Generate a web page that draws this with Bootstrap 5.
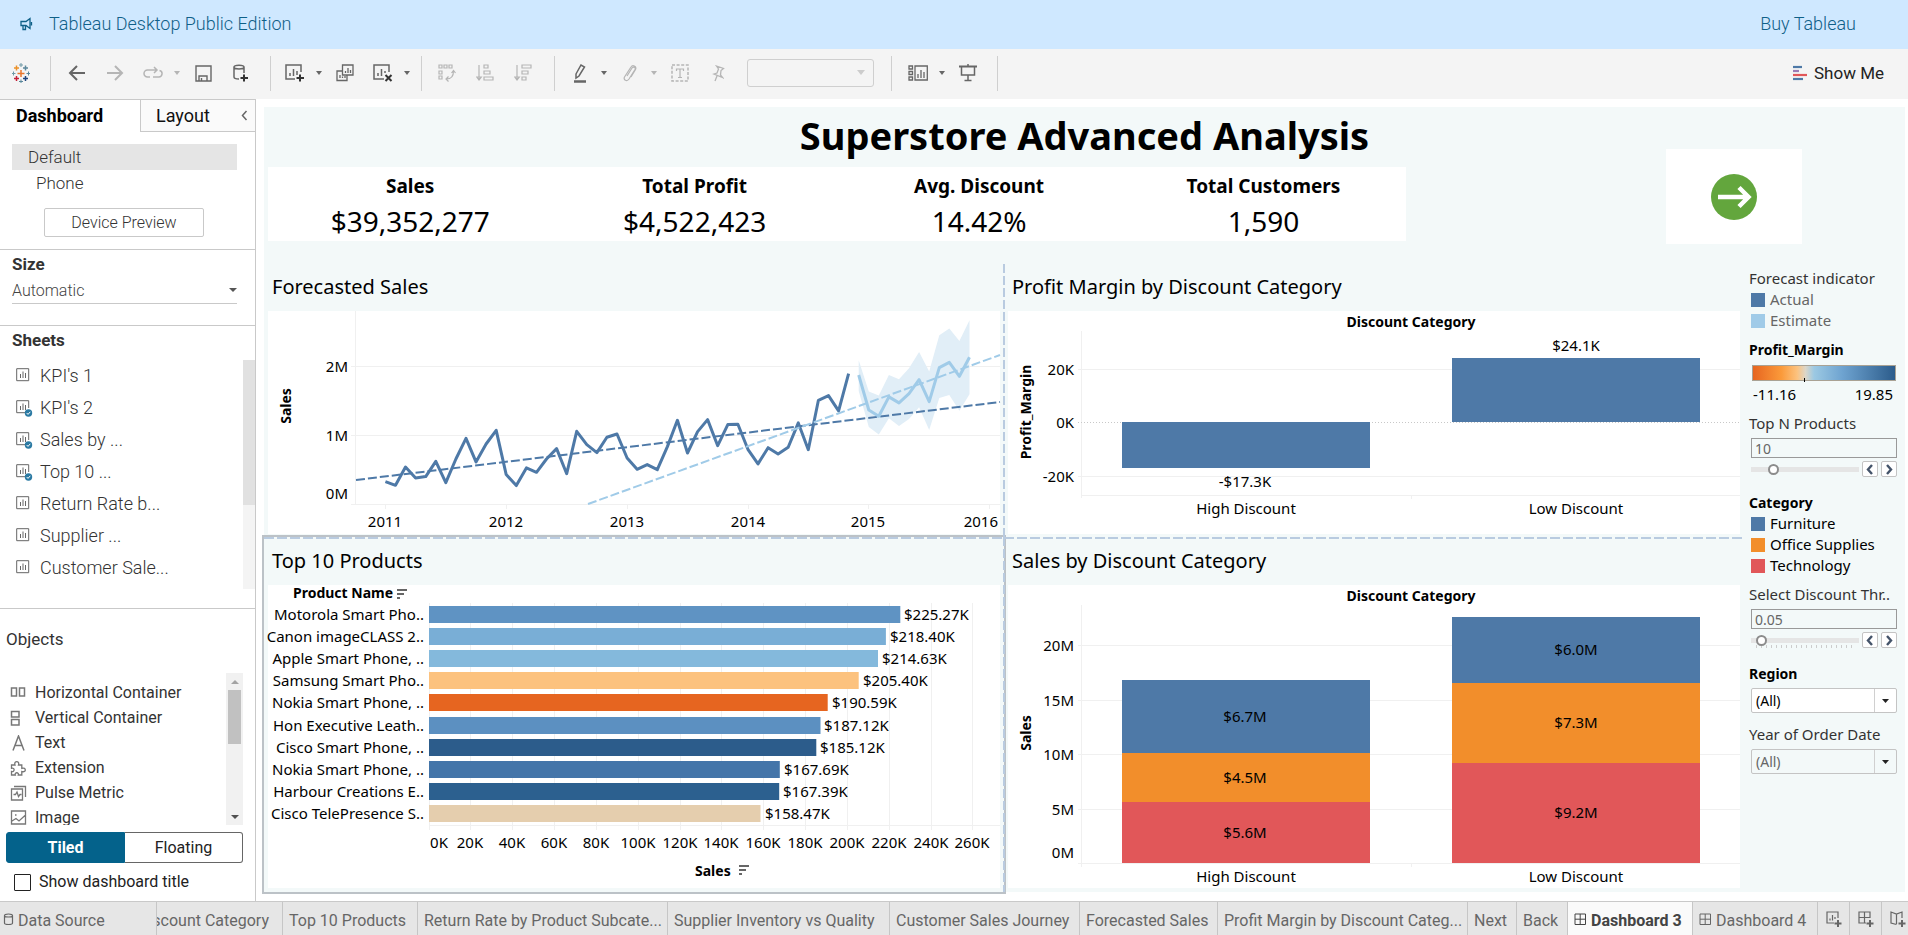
<!DOCTYPE html>
<html lang="en">
<head>
<meta charset="utf-8">
<meta name="viewport" content="width=device-width, initial-scale=1">
<title>Superstore Advanced Analysis</title>
<link href="https://cdn.jsdelivr.net/npm/bootstrap@5.3.0/dist/css/bootstrap.min.css" rel="stylesheet">
<style>
  :root { --line:#c9c9c9; --canvas:#f3f9f9; --ink:#333; --dash:#b9cbe0; }
  body { font-family: Roboto, "Liberation Sans", sans-serif; font-size:16px; line-height:24px; color:var(--ink); background:#fff; }
  svg { display:block; }
  .ic { fill:none; stroke:currentColor; stroke-width:1.5; }
  button { color:inherit; }
  .bare { border:0; background:none; padding:0; }

  .promo { background:#cfe8ff; height:49px; padding:0 52px 2px 20px; font-size:18px; font-weight:300; }
  .promo, .promo a { color:#0f6088; }
  .tools { background:#f4f4f4; height:50px; color:#666; padding-bottom:2px; }
  .tgroup { display:flex; align-items:center; gap:10px; height:35px; border-right:1px solid #cfcfcf; }
  .tgroup .tb { width:28px; height:28px; display:flex; align-items:center; justify-content:center; }
  .tgroup .dd { width:12px; margin:0 -4px 0 -6px; display:flex; justify-content:center; }
  .dd::before { content:""; border:3px solid transparent; border-top:4px solid #666; border-bottom:0; }
  .dim { color:#b5b5b5; }
  .dd.dim::before { border-top-color:#b5b5b5; }
  .g0 { width:51px; padding-left:7px; }
  .g1 { padding:0 15px 0 12px; }
  .g2 { padding:0 12px 0 10px; }
  .g3 { padding:0 17px 0 11px; }
  .g4 { padding:0 17px 0 11px; }
  .g5 { padding:0 15px 0 12px; }
  .fit { width:127px; height:28px; margin-left:5px; border:1px solid #cfcfcf; border-radius:3px; appearance:none; background:#f4f4f4 url("data:image/svg+xml,%3Csvg xmlns='http://www.w3.org/2000/svg' width='8' height='6'%3E%3Cpath d='M0 0h8L4 5z' fill='%23ccc'/%3E%3C/svg%3E") no-repeat right 8px center; }
  .showme { font-size:17px; color:#222; padding-right:24px; }

  .side { width:256px; flex:none; border-right:1px solid var(--line); border-top:1px solid var(--line); }
  .side-tabs { height:32px; font-size:18px; color:#111; }
  .tab-a { width:140px; padding:0 16px; text-align:left; font-weight:700; color:#000; }
  .tab-b { background:#fafafa; border:solid var(--line); border-width:0 0 1px 1px; padding:0 7px 0 15px; }
  .tab-b svg { color:#666; }
  .devices { padding:12px 18px 0 12px; font-size:17px; line-height:26px; font-weight:300; }
  .devices .on { background:#e5e5e5; }
  .devices button { display:block; width:100%; text-align:left; font-weight:300; }
  .preview { width:160px; height:29px; border:1px solid var(--line); border-radius:2px; background:#fff; margin:12px 0 12px 44px; font-size:16px; font-weight:300; }
  .sec { border-top:1px solid var(--line); }
  .sec h2 { font-size:17px; line-height:28px; font-weight:700; margin:0; padding-left:12px; }
  .size-select { width:225px; height:26px; margin:0 0 21px 12px; padding:0; border:0; border-bottom:1px solid var(--line); appearance:none; color:#444; font-weight:300; background:#fff url("data:image/svg+xml,%3Csvg xmlns='http://www.w3.org/2000/svg' width='8' height='5'%3E%3Cpath d='M0 0h8L4 4z' fill='%23555'/%3E%3C/svg%3E") no-repeat right center; }
  .sheet-list { height:229px; margin-top:6px; font-size:18px; font-weight:300; }
  .sheet-list li { height:32px; padding-left:16px; gap:7px; color:#333; }
  .sbar { width:12px; background:#f4f4f4; }
  .sbar div { height:145px; background:#e1e1e1; }
  .sheets { height:283px; }
  .sec h2.obj { font-size:17px; font-weight:400; line-height:26px; padding:17px 0 0 6px; }
  .obj-list { height:152px; margin-top:21px; overflow:hidden; }
  .obj-list ul { padding-top:7px; }
  .obj-list li { height:25px; padding-left:10px; gap:8px; }
  .obj-list svg { width:17px; color:#777; }
  .sbar2 { width:17px; margin-right:12px; background:#f1f1f1; }
  .sbar2 .thumb { width:13px; height:54px; background:#c1c1c1; }
  .up, .down { height:17px; display:flex; align-items:center; }
  .up::before { content:""; border:4px solid transparent; border-bottom-color:#a3a3a3; border-top:0; }
  .down::before { content:""; border:4px solid transparent; border-top-color:#505050; border-bottom:0; }
  .seg { margin:7px 12px 0 6px; height:31px; }
  .seg button { flex:1; border:1px solid #666; font-size:16px; line-height:28px; background:#fff; color:#222; padding:0; }
  .seg .on { background:#04628b; border-color:#04628b; color:#fff; font-weight:700; border-radius:3px 0 0 3px; }
  .seg .off { border-left:0; border-radius:0 3px 3px 0; }
  .titlebox { padding:7px 0 6px 14px; gap:8px; color:#222; }
  .titlebox input { width:17px; height:17px; appearance:none; border:1px solid #222; border-radius:1px; margin:0; }

  .board { font-family:"Noto Sans", "Liberation Sans", sans-serif; font-size:15px; line-height:21px; color:#000; background:var(--canvas); margin:8px 3px 9px 8px; }
  .board h1 { font-size:38px; line-height:57px; font-weight:700; text-align:center; margin:0; padding-bottom:3px; }
  .kpirow { padding-left:4px; height:97px; }
  .kpis { flex:none; width:69.5%; height:74px; background:#fff; padding-top:4px; text-align:center; }
  .kpis dt { font-size:19px; line-height:30px; }
  .kpis dd { font-size:28px; line-height:40px; margin:0; }
  .navcell { flex:1; padding-right:103px; }
  .navcell .bare { width:136px; height:95px; margin-top:-18px; background:#fff; }
  .sheets-grid { display:grid; grid-template-columns:1fr 1fr; flex:1; }
  .pane { position:relative; padding:0 4px 3px; }
  .pane h2 { font-size:20px; line-height:46px; margin:0; padding:0 0 1px 4px; font-weight:400; }
  .low h2 { line-height:47px; }
  .low { padding-bottom:4px; }
  .pane svg { width:100%; height:auto; background:#fff; font-size:15px; overflow:visible; }
  .lft::after { content:""; position:absolute; z-index:2; top:0; bottom:0; right:-1px; width:2px; background:repeating-linear-gradient(var(--dash) 0 9px, transparent 9px 12px); }
  .low::before { content:""; position:absolute; z-index:2; left:0; right:0; top:0; height:2px; background:repeating-linear-gradient(90deg, var(--dash) 0 10px, transparent 10px 13px); }
  .picked { outline:2px solid #bcc2c7; z-index:1; }
  .b { font-weight:700; font-size:14px; }
  .gl { stroke:#f0f0f0; stroke-width:1; }
  .end { text-anchor:end; } .mid { text-anchor:middle; }

  .filters { width:161px; flex:none; padding:4px 8px 0 5px; color:#333; }
  .filters label, .filters .head { display:block; margin-top:8px; white-space:nowrap; }
  .filters .strong { font-weight:700; font-size:14px; color:#000; }
  .key { padding-left:2px; gap:5px; }
  .key i { width:14px; height:14px; }
  .soft { color:#666; }
  .ramp { height:16px; margin:5px 1px 3px 3px; border:1px solid #a9a294; background:linear-gradient(90deg,#e66520,#fb9a3a 20%,#fcc27e 31%,#dcd6c8 37%,#9cc9e3 43%,#6ea3d0 63%,#2c5c8b); position:relative; }
  .ramp::after { content:""; position:absolute; left:36%; bottom:-2px; width:1px; height:4px; background:#000; }
  .txt { width:146px; height:20px; margin:4px 0 3px 2px; padding:0 3px; border:1px solid #999; background:var(--canvas); color:#666; font-size:14px; line-height:18px; border-radius:0; display:block; }
  .slide { height:16px; margin:0 0 15px 2px; gap:3px; }
  .slide input { flex:1; min-width:0; height:16px; margin:0; padding:0; appearance:none; background:linear-gradient(#e5e5e5,#e5e5e5) 0 6px/100% 5px no-repeat; }
  .slide input::-webkit-slider-thumb { appearance:none; width:11px; height:11px; border-radius:50%; background:#fff; border:2px solid #8c8c8c; }
  .slide .ticks { background:linear-gradient(#e5e5e5,#e5e5e5) 0 6px/100% 5px no-repeat, repeating-linear-gradient(90deg,#ccc 0 1px,transparent 1px 5px) 5px 13px/98px 3px no-repeat; }
  .slide button { width:16px; height:16px; padding:0; background:#fff; border:1px solid #c4c4c4; border-radius:2px; color:#44546a; display:flex; align-items:center; justify-content:center; }
  .pick { width:146px; height:25px; margin:4px 0 11px 2px; padding:0 4px; border:1px solid #c4c4c4; border-radius:2px; appearance:none; font-size:14px; display:block; color:#000; background:#fff url("data:image/svg+xml,%3Csvg xmlns='http://www.w3.org/2000/svg' width='22' height='23'%3E%3Cpath d='M.5 0v23' stroke='%23d0d0d0'/%3E%3Cpath d='M8 10h7l-3.500 4z' fill='%23222'/%3E%3C/svg%3E") no-repeat right center; }
  .pick.soft { color:#666; background-color:var(--canvas); }

  .tabs { height:34px; background:#e6e6e6; border-top:1px solid var(--line); z-index:5; }
  .tabs button { border:0; border-right:1px solid #c6c6c6; background:none; padding:0 0 2px 6px; height:33px; white-space:nowrap; overflow:hidden; display:flex; align-items:end; gap:4px; flex:none; font-weight:400; color:#666; }
  .tabs button svg { flex:none; align-self:center; margin-top:3px; }
  .tabs .now { background:#fafafa; color:#444; font-weight:700; }
  .w156{width:157px} .w126{width:126px} .w135{width:135px} .w250{width:250px} .w222{width:222px} .w190{width:190px} .w138{width:138px} .w49{width:49px} .w51{width:51px} .w125{width:125px} .w32{width:32px} .w26{width:26px}
  .tabs .w156 { padding-left:3px; } .tabs .w126 { justify-content:end; padding-right:13px; padding-left:0; }
</style>
</head>
<body>
<svg width="0" height="0" class="position-absolute" aria-hidden="true">
  <symbol id="sheet" viewBox="0 0 17 17"><path d="M.7.700h12v12h-12zM4.500 10V6M7 10V3.500M9.500 10V5" fill="none" stroke="#666"/></symbol>
  <symbol id="used" viewBox="0 0 17 17"><path d="M12.700 8V.7h-12v12H9M4.500 10V6M7 10V3.500M9.500 10V5" fill="none" stroke="#666"/><circle cx="12.500" cy="13" r="3.700" fill="#2b7aa3"/><path d="M10.700 13l1.300 1.400 2.300-2.600" fill="none" stroke="#fff"/></symbol>
  <symbol id="dash" viewBox="0 0 13 13"><path d="M1 1h10.500v10.500H1zM6.200 1v10.500M1 6.200h10.500" fill="none" stroke="currentColor"/></symbol>
</svg>
<div class="d-flex flex-column min-vh-100">
  <header>
    <div class="promo d-flex align-items-center">
      <svg class="ic me-3" width="13" height="14" viewBox="0 0 13 14"><path d="M1 4.500h5l4-3v10l-4-3H1zM3 8.500v4h2.500v-4M11.500 5v3.500" stroke-width="1.300"/></svg>
      <span>Tableau Desktop Public Edition</span>
      <a class="ms-auto text-decoration-none" href="#">Buy Tableau</a>
    </div>
    <div class="tools d-flex align-items-center">
      <div class="tgroup g0"><button class="tb bare" aria-label="Start page"><svg width="18" height="20" viewBox="0 0 18 20" fill="none" stroke-width="1.500"><path d="M9 7v7M5.500 10.500h7" stroke="#e8762d"/><path d="M4.500 2.500v5M2 5h5" stroke="#eb9129"/><path d="M13.500 2.500v5M11 5h5" stroke="#5b879b"/><path d="M4.500 13v5M2 15.500h5" stroke="#c72037"/><path d="M13.500 13v5M11 15.500h5" stroke="#1f457e"/><path d="M9 0v4M7 2h4M1.500 8.500v4M0 10.500h3.500" stroke="#7099a6" stroke-width="1"/><path d="M16.500 8.500v4M14.500 10.500H18M9 16.500v3.500M7 18.500h4" stroke="#59879b" stroke-width="1"/></svg></button></div>
      <div class="tgroup g1">
        <button class="tb bare" aria-label="Undo"><svg class="ic" width="18" height="16" viewBox="0 0 18 16"><path d="M17 8H2M9 1L2 8l7 7" stroke-width="2"/></svg></button>
        <button class="tb bare dim" aria-label="Redo"><svg class="ic" width="18" height="16" viewBox="0 0 18 16"><path d="M1 8h15M9 1l7 7-7 7" stroke-width="2"/></svg></button>
        <button class="tb bare dim" aria-label="Replay"><svg class="ic" width="20" height="14" viewBox="0 0 20 14"><path d="M7 11H4.500a3.500 3.500 0 010-7H14M11 1l3 3-3 3M16.500 4.500a3.300 3.300 0 01-1 6.500H10"/></svg></button>
        <button class="dd bare dim" aria-label="Replay options"></button>
        <button class="tb bare" aria-label="Save"><svg class="ic" width="17" height="17" viewBox="0 0 17 17"><path d="M1 1h15v15H1zM4 16v-5h8v5M6.500 16v-3" stroke-width="1.400"/></svg></button>
        <button class="tb bare" aria-label="New data source"><svg class="ic" width="16" height="18" viewBox="0 0 16 18"><path d="M1 3v10c0 1.500 2 2 5 2M11 3v6M1 3c0-2.500 10-2.500 10 0S1 5.500 1 3"/><path d="M11 10.500v7M7.500 14H15" stroke="#333" stroke-width="2"/></svg></button>
      </div>
      <div class="tgroup g2">
        <button class="tb bare" aria-label="New worksheet"><svg class="ic" width="20" height="18" viewBox="0 0 20 18"><path d="M16 8V1H1v14h9M5 12V9M8.500 12V5M12 11V7"/><path d="M15 10.500v7M11.500 14H19" stroke="#333" stroke-width="2"/></svg></button>
        <button class="dd bare" aria-label="New worksheet options"></button>
        <button class="tb bare" aria-label="Duplicate"><svg class="ic" width="18" height="18" viewBox="0 0 18 18"><path d="M6.500 1H17v10H6.500zM9.500 9V7M12 9V4M14.500 9V6M6.500 7H1v9.500h10V11M4 14v-3M6.500 14v-1.500M9 14v-2" stroke-width="1.300"/></svg></button>
        <button class="tb bare" aria-label="Clear sheet"><svg class="ic" width="20" height="18" viewBox="0 0 20 18"><path d="M16 8V1H1v14h10M5 12V9M8.500 12V5M12 9V7"/><path d="M12.500 11l6 6M18.500 11l-6 6" stroke="#333" stroke-width="2"/></svg></button>
        <button class="dd bare" aria-label="Clear options"></button>
      </div>
      <div class="tgroup g3 dim">
        <button class="tb bare" aria-label="Swap rows and columns"><svg class="ic" width="18" height="18" viewBox="0 0 18 18"><path d="M1 1h3v3H1zM6 1h3v3H6zM11 1h3v3h-3zM1 7h3v3H1zM1 12h3v3H1zM15.500 7c0 6-3 8-7 8M13.500 9l2-2.500 2 2.500M10.500 12.500L8 15l2.500 2.500" stroke-width="1.200"/></svg></button>
        <button class="tb bare" aria-label="Sort ascending"><svg class="ic" width="18" height="18" viewBox="0 0 18 18"><path d="M3 1v14M.7 13L3 16l2.300-3zM8 1h4v3H8zM8 7h6v3H8zM8 13h9v3H8z" stroke-width="1.200"/></svg></button>
        <button class="tb bare" aria-label="Sort descending"><svg class="ic" width="18" height="18" viewBox="0 0 18 18"><path d="M3 1v14M.7 13L3 16l2.300-3zM8 1h9v3H8zM8 7h6v3H8zM8 13h4v3H8z" stroke-width="1.200"/></svg></button>
      </div>
      <div class="tgroup g4">
        <button class="tb bare" aria-label="Highlight"><svg class="ic" width="14" height="19" viewBox="0 0 14 19"><path d="M3 10l5-9 3.500 2L6 12l-3 2z"/><path d="M1 17.500h12" stroke-width="2.500"/></svg></button>
        <button class="dd bare" aria-label="Highlight options"></button>
        <button class="tb bare dim" aria-label="Group members"><svg class="ic" width="14" height="18" viewBox="0 0 14 18"><path d="M4 12l5-8c1.500-2 4-.5 3 1.500L6 15c-2 3-6 1-4.500-2L8 3c1.500-2.500 6-1 4.500 2.500L8 13" stroke-width="1.200"/></svg></button>
        <button class="dd bare dim" aria-label="Group options"></button>
        <button class="tb bare dim" aria-label="Show mark labels"><svg class="ic" width="18" height="18" viewBox="0 0 18 18"><path d="M1 1h16v16H1z" stroke-dasharray="3 1.600"/><path d="M5.500 7V5h7v2M9 5v8.500M7 13.500h4" stroke-width="1.200"/></svg></button>
        <button class="tb bare dim" aria-label="Fix axes"><svg class="ic" width="15" height="17" viewBox="0 0 15 17"><path d="M5.500 1l7 2.500-2.500 2-.5 4.500 2 2.500-8.500-3.500 3-1L7.500 4zM6 11l-2 5" stroke-width="1.300"/></svg></button>
        <select class="fit" aria-label="Fit" disabled></select>
      </div>
      <div class="tgroup g5">
        <button class="tb bare" aria-label="Show or hide cards"><svg class="ic" width="20" height="16" viewBox="0 0 20 16"><path d="M1 1h3.500v3H1zM1 6.500h3.500v3H1zM1 12h3.500v3H1zM7 1h12.300v14H7zM10 13V9M13 13V5M16 13V7" stroke-width="1.300"/></svg></button>
        <button class="dd bare" aria-label="Card options"></button>
        <button class="tb bare" aria-label="Presentation mode"><svg class="ic" width="18" height="18" viewBox="0 0 18 18"><path d="M0 2.500h18" stroke-width="2"/><path d="M2.500 3v8h13V3M9 0v2M9 11v6M5.500 16.500h7"/></svg></button>
      </div>
      <button class="bare showme ms-auto d-flex align-items-center"><svg class="me-1" width="18" height="16" viewBox="0 0 18 16" fill="none" stroke-width="2.200"><path d="M1 2h9" stroke="#4e79a7"/><path d="M1 6h6" stroke="#9a7bb5"/><path d="M1 10h14" stroke="#e15759"/><path d="M1 14h10" stroke="#4e79a7"/></svg>Show Me</button>
    </div>
  </header>

  <div class="d-flex flex-grow-1">
    <aside class="side">
      <div class="side-tabs d-flex">
        <button class="bare tab-a">Dashboard</button>
        <div class="tab-b d-flex align-items-center flex-grow-1">
          <button class="bare">Layout</button>
          <button class="bare ms-auto" aria-label="Collapse pane"><svg class="ic" width="7" height="11" viewBox="0 0 7 11"><path d="M5.500 1L1.500 5.500l4 4.500"/></svg></button>
        </div>
      </div>
      <div class="devices">
        <button class="bare on ps-3">Default</button>
        <button class="bare ps-4">Phone</button>
      </div>
      <button class="preview">Device Preview</button>
      <section class="sec">
        <h2><label for="size">Size</label></h2>
        <select id="size" class="size-select"><option>Automatic</option></select>
      </section>
      <section class="sec sheets">
        <h2>Sheets</h2>
        <div class="sheet-list d-flex">
          <ul class="list-unstyled mb-0 flex-grow-1">
            <li class="d-flex align-items-center"><svg width="17" height="17"><use href="#sheet"/></svg>KPI's 1</li>
            <li class="d-flex align-items-center"><svg width="17" height="17"><use href="#used"/></svg>KPI's 2</li>
            <li class="d-flex align-items-center"><svg width="17" height="17"><use href="#used"/></svg>Sales by ...</li>
            <li class="d-flex align-items-center"><svg width="17" height="17"><use href="#used"/></svg>Top 10 ...</li>
            <li class="d-flex align-items-center"><svg width="17" height="17"><use href="#sheet"/></svg>Return Rate b...</li>
            <li class="d-flex align-items-center"><svg width="17" height="17"><use href="#sheet"/></svg>Supplier ...</li>
            <li class="d-flex align-items-center"><svg width="17" height="17"><use href="#sheet"/></svg>Customer Sale...</li>
          </ul>
          <div class="sbar"><div></div></div>
        </div>
      </section>
      <section class="sec">
        <h2 class="obj">Objects</h2>
        <div class="obj-list d-flex">
          <ul class="list-unstyled mb-0 flex-grow-1">
            <li class="d-flex align-items-center"><svg class="ic" height="14" viewBox="0 0 17 14"><path d="M1.500 2h5v8h-5zM9.500 2h5v8h-5z"/></svg>Horizontal Container</li>
            <li class="d-flex align-items-center"><svg class="ic" height="16" viewBox="0 0 17 16"><path d="M1.500 1.500H9V7H1.500zM1.500 9.500H9V15H1.500z"/></svg>Vertical Container</li>
            <li class="d-flex align-items-center"><svg class="ic" height="16" viewBox="0 0 17 16"><path d="M3 15.500L8.500 1 14 15.500M5 10.500h7"/></svg>Text</li>
            <li class="d-flex align-items-center"><svg class="ic" height="16" viewBox="0 0 17 16"><path d="M1.500 6.500V5H5c-1.500-4.500 5-4.500 3.500 0h3.300v3.300c4.700-1.500 4.700 4.700 0 3.200V15H8.300c1-3-4-3-3 0H1.500v-3.500c3.500.7 3.500-4 0-3.200z" stroke-width="1.300"/></svg>Extension</li>
            <li class="d-flex align-items-center"><svg class="ic" height="16" viewBox="0 0 17 16"><path d="M1.500 4h11v11h-11zM4 1.500h11.500V12M3.500 9.500h2L7 7l1.500 4.500L10 9.500h1.500" stroke-width="1.300"/></svg>Pulse Metric</li>
            <li class="d-flex align-items-center"><svg class="ic" height="15" viewBox="0 0 17 15"><path d="M1.500 1h14v13h-14zM2 11l4-2.500L9 11l6-5.500M5 5h1.500" stroke-width="1.300"/></svg>Image</li>
          </ul>
          <div class="sbar2 d-flex flex-column align-items-center"><div class="up"></div><div class="thumb"></div><div class="down mt-auto"></div></div>
        </div>
        <div class="seg d-flex"><button class="on">Tiled</button><button class="off">Floating</button></div>
        <div class="titlebox d-flex align-items-center"><input type="checkbox" id="showTitle"><label for="showTitle">Show dashboard title</label></div>
      </section>
    </aside>

    <main class="board flex-grow-1">
      <h1>Superstore Advanced Analysis</h1>
      <div class="kpirow d-flex">
        <div class="kpis row g-0">
          <dl class="col mb-0"><dt>Sales</dt><dd>$39,352,277</dd></dl>
          <dl class="col mb-0"><dt>Total Profit</dt><dd>$4,522,423</dd></dl>
          <dl class="col mb-0"><dt>Avg. Discount</dt><dd>14.42%</dd></dl>
          <dl class="col mb-0"><dt>Total Customers</dt><dd>1,590</dd></dl>
        </div>
        <div class="navcell d-flex justify-content-end">
          <button class="bare d-flex align-items-center justify-content-center" aria-label="Next dashboard"><svg width="48" height="48" viewBox="0 0 48 48"><circle cx="24" cy="24" r="23" fill="#63a63d"/><path d="M8 24h29M29 14.500l9.500 9.500-9.500 9.500" fill="none" stroke="#fff" stroke-width="4.500"/></svg></button>
        </div>
      </div>
      <div class="d-flex">
        <div class="sheets-grid">
          <section class="pane lft">
            <h2>Forecasted Sales</h2>
            <svg id="forecast" viewBox="0 0 732 223" role="img" aria-label="Forecasted Sales">
              <path class="gl" d="M87.500 0v193M83 55.500h649M83 124.500h649M83 193.500h649" fill="none"/>
              <text class="end" x="80" y="61">2M</text><text class="end" x="80" y="130">1M</text><text class="end" x="80" y="188">0M</text>
              <text class="b mid" transform="translate(23 95) rotate(-90)">Sales</text>
              <path id="band" fill="#e1eef7"/>
              <path d="M88 169L732 91" stroke="#4e79a7" stroke-width="2" stroke-dasharray="9 3"/>
              <path id="actual" fill="none" stroke="#4e79a7" stroke-width="3" stroke-linejoin="round"/>
              <path d="M320 193L732 44" stroke="#a0cbe8" stroke-width="2" stroke-dasharray="9 3"/>
              <path id="estimate" fill="none" stroke="#a0cbe8" stroke-width="3" stroke-linejoin="round"/>
              <path d="M117.500 193v5M238.500 193v5M359.500 193v5M480.500 193v5M600.500 193v5M721.500 193v5" class="gl"/>
              <text class="mid" x="117" y="216">2011</text><text class="mid" x="238" y="216">2012</text><text class="mid" x="359" y="216">2013</text><text class="mid" x="480" y="216">2014</text><text class="mid" x="600" y="216">2015</text><text class="end" x="730" y="216">2016</text>
            </svg>
          </section>
          <section class="pane">
            <h2>Profit Margin by Discount Category</h2>
            <svg viewBox="0 0 732 223" role="img" aria-label="Profit Margin by Discount Category">
              <path class="gl" d="M73.500 20v167M70 58.500h662M70 165.500h662M73 184.500h659M403.500 184v4"/>
              <path d="M70 111.500h662" stroke="#c8c8c8" stroke-dasharray="1 2"/>
              <text class="b mid" x="403" y="16">Discount Category</text>
              <text class="end" x="66" y="64">20K</text><text class="end" x="66" y="117">0K</text><text class="end" x="66" y="171">-20K</text>
              <text class="b mid" transform="translate(23 101) rotate(-90)">Profit_Margin</text>
              <path d="M114 111h248v46H114zM444 47h248v64H444z" fill="#4e79a7"/>
              <text class="mid" x="237" y="176">-$17.3K</text><text class="mid" x="568" y="40">$24.1K</text>
              <text class="mid" x="238" y="203">High Discount</text><text class="mid" x="568" y="203">Low Discount</text>
            </svg>
          </section>
          <section class="pane low lft picked">
            <h2>Top 10 Products</h2>
            <svg id="top" viewBox="0 0 732 303" role="img" aria-label="Top 10 Products">
              <text class="b" x="25" y="13">Product Name</text>
              <path d="M129 5h10M129 9h7M129 13h3M471 281h10M471 285h7M471 289h3" stroke="#666" stroke-width="2"/>
              <path class="gl" d="M161 240.500h571"/>
              <text class="b" x="427" y="291">Sales</text>
            </svg>
          </section>
          <section class="pane low">
            <h2>Sales by Discount Category</h2>
            <svg viewBox="0 0 732 303" role="img" aria-label="Sales by Discount Category">
              <path class="gl" d="M73.500 20v262M70 60.500h662M70 115.500h662M70 169.500h662M70 224.500h662M70 278.500h662M403.500 278v4"/>
              <text class="b mid" x="403" y="16">Discount Category</text>
              <text class="end" x="66" y="66">20M</text><text class="end" x="66" y="121">15M</text><text class="end" x="66" y="175">10M</text><text class="end" x="66" y="230">5M</text><text class="end" x="66" y="273">0M</text>
              <text class="b mid" transform="translate(23 148) rotate(-90)">Sales</text>
              <path d="M114 95h248v73H114zM444 32h248v66H444z" fill="#4e79a7"/>
              <path d="M114 168h248v49H114zM444 98h248v80H444z" fill="#f28e2b"/>
              <path d="M114 217h248v61H114zM444 178h248v100H444z" fill="#e15759"/>
              <text class="mid" x="237" y="137">$6.7M</text><text class="mid" x="237" y="198">$4.5M</text><text class="mid" x="237" y="253">$5.6M</text>
              <text class="mid" x="568" y="70">$6.0M</text><text class="mid" x="568" y="143">$7.3M</text><text class="mid" x="568" y="233">$9.2M</text>
              <text class="mid" x="238" y="297">High Discount</text><text class="mid" x="568" y="297">Low Discount</text>
            </svg>
          </section>
        </div>
        <div class="filters">
          <div>Forecast indicator</div>
          <div class="key soft d-flex align-items-center"><i style="background:#4e79a7"></i>Actual</div>
          <div class="key soft d-flex align-items-center"><i style="background:#a0cbe8"></i>Estimate</div>
          <div class="head strong">Profit_Margin</div>
          <div class="ramp"></div>
          <div class="d-flex justify-content-between ps-1 pe-1 text-black"><span>-11.16</span><span>19.85</span></div>
          <label for="topn">Top N Products</label>
          <input id="topn" class="txt" type="text" value="10">
          <div class="slide d-flex"><input type="range" aria-label="Top N Products" value="18"><button aria-label="Fewer"><svg class="ic" width="8" height="11" viewBox="0 0 8 11"><path d="M6 1L2 5.500 6 10" stroke-width="2.400"/></svg></button><button aria-label="More"><svg class="ic" width="8" height="11" viewBox="0 0 8 11"><path d="M2 1l4 4.500L2 10" stroke-width="2.400"/></svg></button></div>
          <div class="head strong">Category</div>
          <div class="key d-flex align-items-center text-black"><i style="background:#4e79a7"></i>Furniture</div>
          <div class="key d-flex align-items-center text-black"><i style="background:#f28e2b"></i>Office Supplies</div>
          <div class="key d-flex align-items-center text-black"><i style="background:#e15759"></i>Technology</div>
          <label for="disc">Select Discount Thr..</label>
          <input id="disc" class="txt" type="text" value="0.05">
          <div class="slide d-flex"><input class="ticks" type="range" aria-label="Discount threshold" value="5"><button aria-label="Lower"><svg class="ic" width="8" height="11" viewBox="0 0 8 11"><path d="M6 1L2 5.500 6 10" stroke-width="2.400"/></svg></button><button aria-label="Higher"><svg class="ic" width="8" height="11" viewBox="0 0 8 11"><path d="M2 1l4 4.500L2 10" stroke-width="2.400"/></svg></button></div>
          <label class="strong" for="region">Region</label>
          <select id="region" class="pick"><option>(All)</option></select>
          <label for="year">Year of Order Date</label>
          <select id="year" class="pick soft"><option>(All)</option></select>
        </div>
      </div>
    </main>
  </div>

  <nav class="tabs d-flex sticky-bottom overflow-hidden" aria-label="Sheets">
    <button class="w156"><svg class="ic" width="11" height="13" viewBox="0 0 11 13"><path d="M1.500 2.500v7.500c0 2 8 2 8 0V2.500c0-2-8-2-8 0s8 2 8 0" stroke-width="1.200"/></svg>Data Source</button>
    <button class="w126">scount Category</button>
    <button class="w135">Top 10 Products</button>
    <button class="w250">Return Rate by Product Subcate...</button>
    <button class="w222">Supplier Inventory vs Quality</button>
    <button class="w190">Customer Sales Journey</button>
    <button class="w138">Forecasted Sales</button>
    <button class="w250">Profit Margin by Discount Categ...</button>
    <button class="w49">Next</button>
    <button class="w51">Back</button>
    <button class="w125 now"><svg width="13" height="13"><use href="#dash"/></svg>Dashboard 3</button>
    <button class="w125"><svg width="13" height="13"><use href="#dash"/></svg>Dashboard 4</button>
    <button class="w32 ps-2" aria-label="New worksheet"><svg class="ic" width="17" height="16" viewBox="0 0 17 16"><path d="M12 7V1H1v11h7M4 9.500V7.500M6.500 9.500V4M9 8V6" stroke-width="1.200"/><path d="M12 9v7M8.500 12.500h7" stroke-width="2"/></svg></button>
    <button class="w32 ps-2" aria-label="New dashboard"><svg class="ic" width="17" height="16" viewBox="0 0 17 16"><path d="M12 7V1H1v11h7M6.500 1v11M1 6.500h11" stroke-width="1.200"/><path d="M12 9v7M8.500 12.500h7" stroke-width="2"/></svg></button>
    <button class="w26 ps-2 border-0" aria-label="New story"><svg class="ic" width="17" height="16" viewBox="0 0 17 16"><path d="M12 7V1L6.500 3 1 1v11l5.500 1.500M6.500 3v10" stroke-width="1.200"/><path d="M12 9v7M8.500 12.500h7" stroke-width="2"/></svg></button>
  </nav>
</div>
<script src="https://cdn.jsdelivr.net/npm/bootstrap@5.3.0/dist/js/bootstrap.bundle.min.js"></script>
<script>
  // Monthly sales in thousands, starting January 2011
  const actual = [329,275,541,382,401,623,314,657,957,614,874,1072,430,271,527,464,657,807,444,1058,865,749,971,1019,671,507,575,502,836,1217,744,1053,1227,850,1155,1159,797,585,821,729,826,1179,792,1507,1575,1353,1894];
  const estimate = [1874,1367,1275,1556,1469,1604,1807,1488,1981,2058,1855,2130];
  const upper = [2087,1633,1575,1874,1812,1971,2208,1923,2449,2546,2367,2667];
  const lower = [1643,1121,1010,1246,1135,1237,1406,1077,1541,1585,1357,1594];
  const pts = (vals, first) => vals.map((v, i) => [117.4 + (first + i) * 10.07, 193.3 - v * 0.069]);
  const line = p => 'M' + p.map(q => q.map(n => n.toFixed(1)).join(' ')).join('L');
  document.getElementById('actual').setAttribute('d', line(pts(actual, 0)));
  document.getElementById('estimate').setAttribute('d', line(pts(estimate, 47)));
  document.getElementById('band').setAttribute('d', line(pts(upper, 47).concat(pts(lower, 47).reverse())) + 'Z');

  const products = [
    ['Motorola Smart Pho..', 225.27, '#5f93c3'], ['Canon imageCLASS 2..', 218.40, '#79aed6'],
    ['Apple Smart Phone, ..', 214.63, '#84b9dc'], ['Samsung Smart Pho..', 205.40, '#fcc27e'],
    ['Nokia Smart Phone, ..', 190.59, '#e66520'], ['Hon Executive Leath..', 187.12, '#5c90c1'],
    ['Cisco Smart Phone, ..', 185.12, '#2c5c8b'], ['Nokia Smart Phone, ..', 167.69, '#4475a9'],
    ['Harbour Creations E..', 167.39, '#2c608f'], ['Cisco TelePresence S..', 158.47, '#e5ceae']];
  const scale = 2.092;
  let out = '';
  for (let k = 0; k <= 260; k += 20) {
    const x = Math.round(160.5 + k * scale);
    out += `<path class="gl" d="M${x + .5} 18V245"/><text class="mid" x="${k ? x : 171}" y="263">${k}K</text>`;
  }
  products.forEach(([name, v, c], i) => {
    const y = Math.round(21 + i * 22.1);
    out += `<text class="end" x="156" y="${y + 14}">${name}</text><rect x="161" y="${y}" width="${(v * scale).toFixed(1)}" height="17" fill="${c}"/><text x="${Math.round(165 + v * scale)}" y="${y + 14}">$${v.toFixed(2)}K</text>`;
  });
  document.getElementById('top').insertAdjacentHTML('beforeend', out);
</script>
</body>
</html>
